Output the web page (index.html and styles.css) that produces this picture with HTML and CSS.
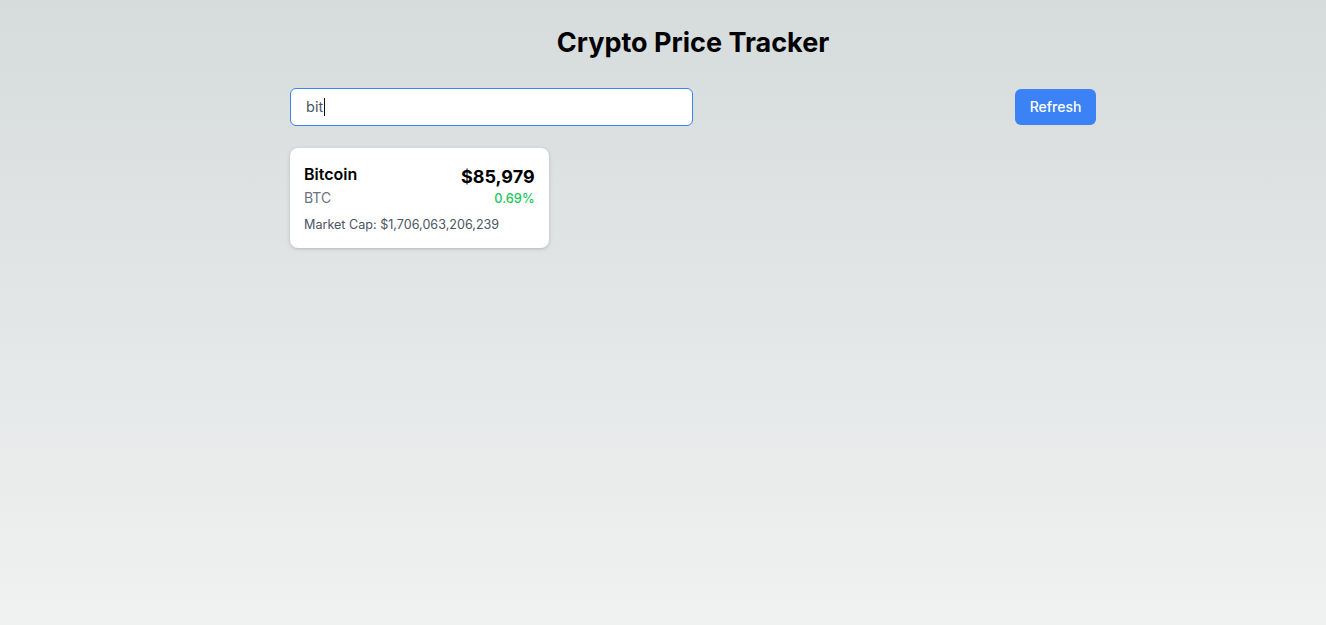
FILE: index.html
```html
<!DOCTYPE html>
<html>
<head>
<meta charset="utf-8">
<link rel="stylesheet" href="styles.css">
</head>
<body>
<div class="page">
  <h1 class="title">Crypto Price Tracker</h1>
  <div class="toolbar">
    <div class="search"><span class="search-text">bit</span><span class="caret"></span></div>
    <button class="refresh">Refresh</button>
  </div>
  <div class="grid">
    <div class="card">
      <div class="row">
        <div class="name">Bitcoin</div>
        <div class="price">$85,979</div>
      </div>
      <div class="row row2">
        <div class="symbol">BTC</div>
        <div class="change">0.69%</div>
      </div>
      <div class="cap">Market Cap: $1,706,063,206,239</div>
    </div>
  </div>
</div>
</body>
</html>
```

FILE: styles.css
```css
html, body {
  margin: 0;
  padding: 0;
  height: 100%;
}
body {
  font-family: Inter, "Noto Sans", sans-serif;
  background: linear-gradient(to bottom, #d6dbdc 0%, #f0f1f1 100%);
  color: #000;
}
.page {
  width: 806px;
  margin-left: 290px;
  padding-top: 26px;
}
.title {
  margin: 0;
  text-align: center;
  font-size: 27px;
  font-weight: 700;
  line-height: 34px;
  color: #000;
}
.toolbar {
  margin-top: 28px;
  display: flex;
  justify-content: space-between;
  align-items: center;
}
.search {
  box-sizing: border-box;
  width: 403px;
  height: 38px;
  background: #fff;
  border: 1px solid #3b82f6;
  border-radius: 6px;
  display: flex;
  align-items: center;
  padding-left: 15px;
  padding-bottom: 1px;
}
.search-text {
  font-size: 14.5px;
  color: #4b5563;
}
.caret {
  display: inline-block;
  width: 1px;
  height: 18px;
  background: #111;
  margin-left: 1px;
}
.refresh {
  box-sizing: border-box;
  width: 81px;
  height: 36px;
  border: none;
  border-radius: 6px;
  background: #3b82f6;
  color: #fff;
  font-family: Inter, "Noto Sans", sans-serif;
  font-size: 14px;
  font-weight: 500;
  padding: 0 0 2px 0;
}
.grid {
  margin-top: 22px;
  display: grid;
  grid-template-columns: repeat(3, 1fr);
  gap: 15px;
}
.card {
  background: #fff;
  border-radius: 8px;
  box-shadow: 0 1px 4px rgba(0,0,0,0.15), 0 1px 2px rgba(0,0,0,0.06);
  padding: 16px 14px 15px 14px;
  height: 100px;
  box-sizing: border-box;
}
.row {
  display: flex;
  justify-content: space-between;
  align-items: flex-end;
}
.name {
  font-size: 16px;
  font-weight: 600;
  line-height: 20px;
}
.price {
  font-size: 18px;
  font-weight: 700;
  line-height: 22px;
  margin-bottom: -4px;
}
.row2 {
  margin-top: 4px;
  align-items: center;
}
.symbol {
  font-size: 14px;
  color: #6b7280;
  line-height: 20px;
}
.change {
  font-size: 12.8px;
  color: #22c55e;
  font-weight: 500;
}
.cap {
  margin-top: 9px;
  font-size: 12.6px;
  color: #4b5563;
}
```
